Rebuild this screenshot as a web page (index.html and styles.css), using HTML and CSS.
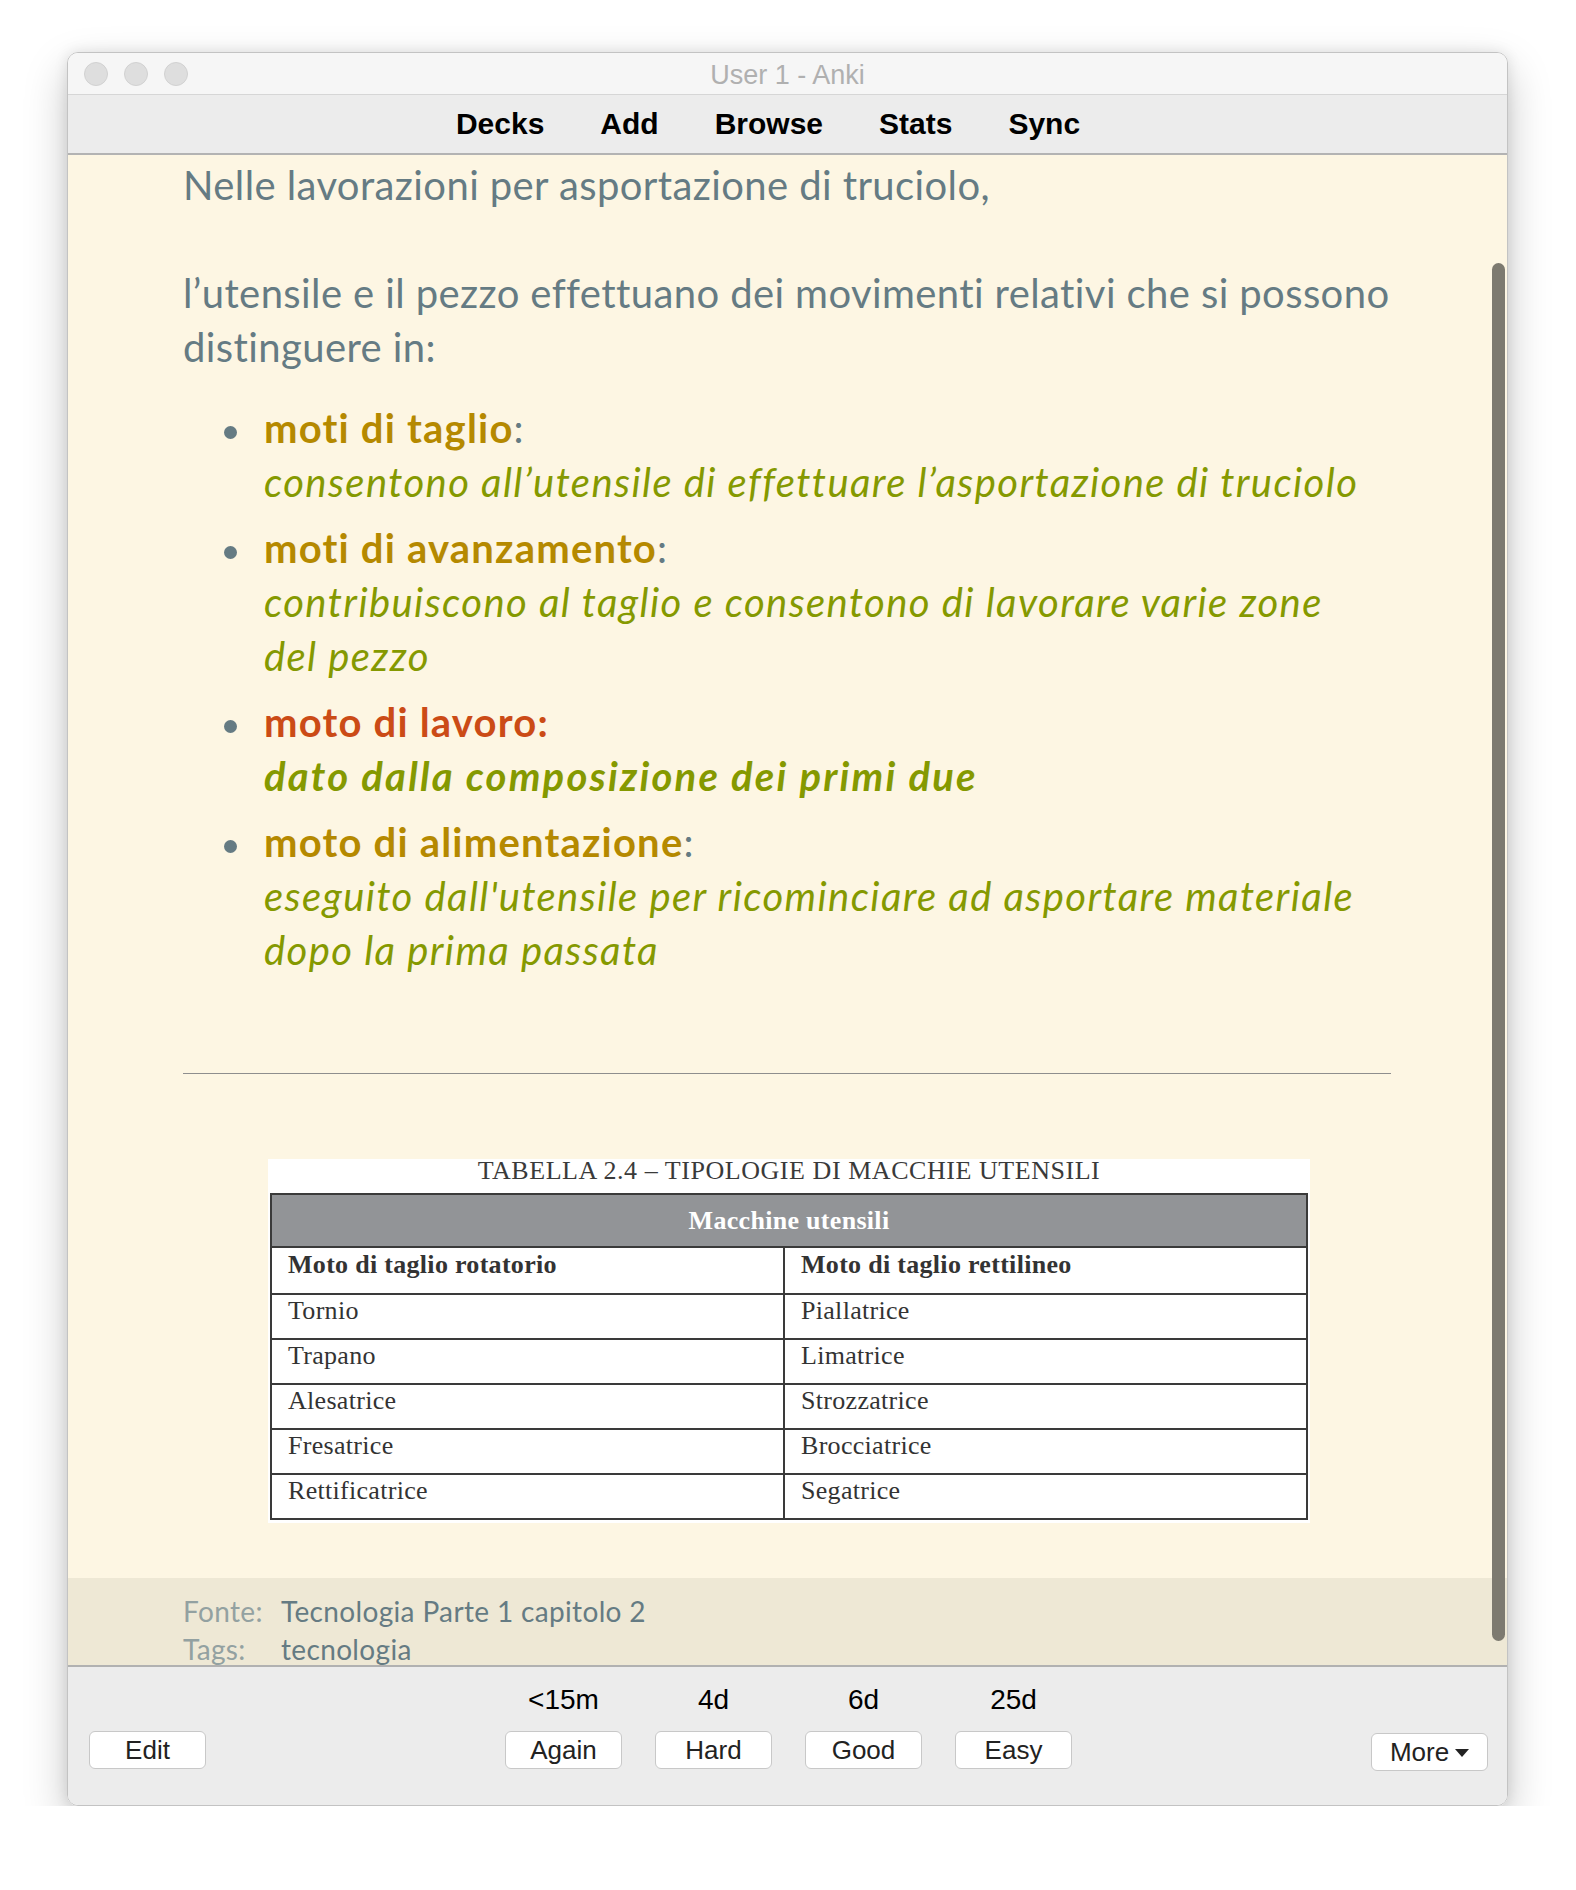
FILE: index.html
```html
<!DOCTYPE html>
<html lang="it">
<head>
<meta charset="utf-8">
<title>User 1 - Anki</title>
<link rel="stylesheet" href="styles.css">
</head>
<body>
<div class="window">
  <div class="titlebar">
    <div class="lights"><span class="light"></span><span class="light"></span><span class="light"></span></div>
    <div class="title">User 1 - Anki</div>
    <div></div>
  </div>
  <div class="toolbar">
    <span class="tb-item">Decks</span>
    <span class="tb-item">Add</span>
    <span class="tb-item">Browse</span>
    <span class="tb-item">Stats</span>
    <span class="tb-item">Sync</span>
  </div>
  <div class="content">
    <div class="card">
      <div class="question">Nelle lavorazioni per asportazione di truciolo,<br><br>l’utensile e il pezzo effettuano dei movimenti relativi che si possono<br>distinguere in:</div>
      <ul class="motions">
        <li><b class="term">moti di taglio</b>:<br><i class="desc">consentono all’utensile di effettuare l’asportazione di truciolo</i></li>
        <li><b class="term">moti di avanzamento</b>:<br><i class="desc">contribuiscono al taglio e consentono di lavorare varie zone<br>del pezzo</i></li>
        <li><b class="term work">moto di lavoro:</b><br><i class="desc strong">dato dalla composizione dei primi due</i></li>
        <li><b class="term">moto di alimentazione</b>:<br><i class="desc">eseguito dall'utensile per ricominciare ad asportare materiale<br>dopo la prima passata</i></li>
      </ul>
      <hr class="divider">
      <div class="figure">
        <div class="caption">TABELLA 2.4 – TIPOLOGIE DI MACCHIE UTENSILI</div>
        <table class="machines">
          <colgroup><col class="col-a"><col class="col-b"></colgroup>
          <tr class="head"><th colspan="2">Macchine utensili</th></tr>
          <tr class="sub"><td>Moto di taglio rotatorio</td><td>Moto di taglio rettilineo</td></tr>
          <tr><td>Tornio</td><td>Piallatrice</td></tr>
          <tr><td>Trapano</td><td>Limatrice</td></tr>
          <tr><td>Alesatrice</td><td>Strozzatrice</td></tr>
          <tr><td>Fresatrice</td><td>Brocciatrice</td></tr>
          <tr><td>Rettificatrice</td><td>Segatrice</td></tr>
        </table>
      </div>
    </div>
    <div class="info">
      <span class="label">Fonte:</span><span class="value">Tecnologia Parte 1 capitolo 2</span>
      <span class="label">Tags:</span><span class="value">tecnologia</span>
    </div>
    <div class="scrollbar"></div>
  </div>
  <div class="bottombar">
    <div class="side-left"><button class="btn">Edit</button></div>
    <div class="answers">
      <div class="answer"><span class="ivl">&lt;15m</span><button class="btn">Again</button></div>
      <div class="answer"><span class="ivl">4d</span><button class="btn">Hard</button></div>
      <div class="answer"><span class="ivl">6d</span><button class="btn">Good</button></div>
      <div class="answer"><span class="ivl">25d</span><button class="btn">Easy</button></div>
    </div>
    <div class="side-right"><button class="btn more">More <svg class="caret" width="14" height="8" viewBox="0 0 14 8"><path d="M0 0H14L7 8Z" fill="#222"/></svg></button></div>
  </div>
</div>
</body>
</html>
```
FILE: styles.css
```css
html, body {
  margin: 0;
  background: #ffffff;
}

.window {
  box-sizing: border-box;
  width: 1441px;
  height: 1754px;
  margin: 52px 0 0 67px;
  border: 1px solid #c3c3c3;
  border-radius: 11px;
  overflow: hidden;
  display: flex;
  flex-direction: column;
  box-shadow: 0 18px 44px rgba(0, 0, 0, 0.22), 0 0 14px rgba(0, 0, 0, 0.10);
}

/* title bar */
.titlebar {
  flex: none;
  box-sizing: border-box;
  height: 42px;
  background: #f6f6f6;
  border-bottom: 1px solid #d6d6d6;
  display: grid;
  grid-template-columns: 1fr auto 1fr;
  align-items: center;
}
.lights {
  display: flex;
  gap: 16px;
  padding-left: 16px;
}
.light {
  box-sizing: border-box;
  width: 24px;
  height: 24px;
  border-radius: 50%;
  background: #dedede;
  border: 1px solid #d1d1d1;
}
.title {
  padding-top: 3px;
  font: 27px "Liberation Sans", Arial, sans-serif;
  color: #b0b0b0;
}

/* toolbar */
.toolbar {
  flex: none;
  box-sizing: border-box;
  height: 60px;
  background: #ececec;
  border-bottom: 2px solid #b3b3b3;
  display: flex;
  justify-content: center;
  align-items: center;
  gap: 56px;
  padding-right: 39px;
  font: bold 30px "Liberation Sans", Arial, sans-serif;
  color: #000;
}

/* card area */
.content {
  flex: 1;
  min-height: 0;
  position: relative;
  display: flex;
  flex-direction: column;
  background: #fdf6e3;
  overflow: hidden;
}
.card {
  flex: 1;
  min-height: 0;
  overflow: hidden;
  padding: 3px 116px 0 115px;
  font-family: Lato, "Noto Sans", sans-serif;
  font-size: 40px;
  line-height: 54px;
  letter-spacing: 0.4px;
  font-variant-ligatures: none;
  color: #657b83;
  white-space: nowrap;
}
.question {
  margin: 0;
}
.motions {
  margin: 27px 0 0;
  padding: 0 0 0 81px;
  list-style: none;
}
.motions li + li {
  margin-top: 12px;
}
.motions li::before {
  content: "";
  display: inline-block;
  width: 13px;
  height: 13px;
  border-radius: 50%;
  background: #657b83;
  margin-left: -40px;
  margin-right: 27px;
  vertical-align: middle;
}
.term {
  color: #b58900;
  font-weight: 700;
  letter-spacing: 1.2px;
}
.term.work {
  color: #cb4b16;
}
.desc {
  color: #859900;
  font-style: italic;
  letter-spacing: 1.4px;
}
.desc.strong {
  font-weight: 700;
  letter-spacing: 2.2px;
}
.divider {
  margin: 96px 0 0;
  border: 0;
  border-top: 1px solid #8e8e8e;
  height: 0;
}

/* table picture */
.figure {
  width: 1042px;
  margin: 85px 0 0 85px;
  background: #ffffff;
  padding-bottom: 3px;
  white-space: normal;
  letter-spacing: 0;
}
.caption {
  font: 26px/24px "Liberation Serif", "Times New Roman", serif;
  letter-spacing: 0.55px;
  color: #3a3a3a;
  text-align: center;
  padding-bottom: 10px;
}
.machines {
  width: 1038px;
  margin: 0 auto;
  border-collapse: collapse;
  table-layout: fixed;
  font: 26px "Liberation Serif", "Times New Roman", serif;
  letter-spacing: 0.3px;
  color: #333;
}
.col-a { width: 513px; }
.machines th,
.machines td {
  border: 2px solid #3a3a3a;
}
.machines th {
  height: 51px;
  padding: 0;
  background: #929497;
  color: #fff;
  font-weight: bold;
  text-align: center;
}
.machines td {
  height: 31px;
  padding: 0 16px 12px;
  text-align: left;
}
.machines .sub td {
  height: 33px;
  font-weight: bold;
}

/* note info */
.info {
  flex: none;
  box-sizing: border-box;
  height: 87px;
  background: #eee8d5;
  padding: 14px 0 0 115px;
  display: grid;
  grid-template-columns: 98px auto;
  justify-content: start;
  font: 28px/38px Lato, "Noto Sans", sans-serif;
  letter-spacing: 0.35px;
  font-variant-ligatures: none;
  overflow: hidden;
}
.label { color: #93a1a1; }
.value { color: #657b83; }

.scrollbar {
  position: absolute;
  right: 2px;
  top: 108px;
  bottom: 24px;
  width: 13px;
  border-radius: 7px;
  background: #7d7a70;
}

/* bottom bar */
.bottombar {
  flex: none;
  box-sizing: border-box;
  height: 140px;
  background: #ececec;
  border-top: 2px solid #b1b1b1;
  display: grid;
  grid-template-columns: 1fr auto 1fr;
  align-items: end;
  padding: 18px 19px 36px 21px;
  font-family: "Liberation Sans", Arial, sans-serif;
}
.answers {
  display: flex;
  gap: 33px;
}
.answer {
  width: 117px;
  display: flex;
  flex-direction: column;
  align-items: center;
  gap: 16px;
}
.ivl {
  font-size: 28px;
  line-height: 30px;
  color: #000;
}
.btn {
  box-sizing: border-box;
  width: 117px;
  height: 38px;
  padding: 0;
  background: #fff;
  border: 1px solid #c8c8c8;
  border-radius: 6px;
  font: 26px "Liberation Sans", Arial, sans-serif;
  color: #222;
}
.side-right {
  justify-self: end;
}
.more {
  margin-bottom: -2px;
  display: inline-flex;
  align-items: center;
  justify-content: center;
  gap: 6px;
}
.caret {
  margin-top: 2px;
}
```
